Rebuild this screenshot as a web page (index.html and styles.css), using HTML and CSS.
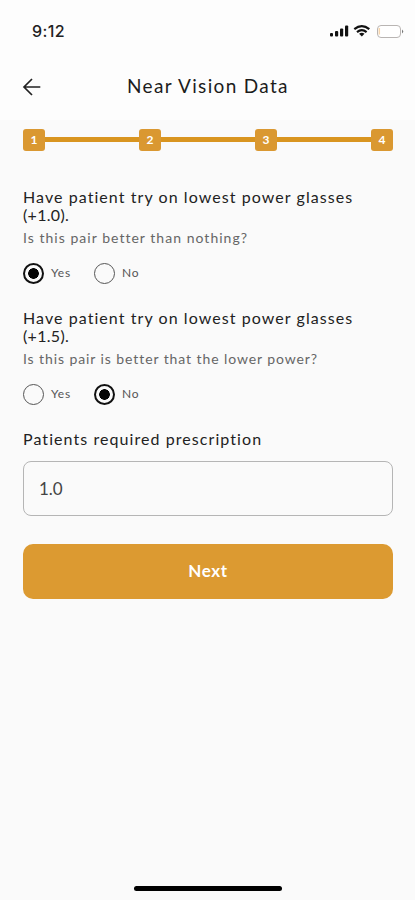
FILE: index.html
```html
<!DOCTYPE html>
<html lang="en">
<head>
<meta charset="utf-8">
<title>Near Vision Data</title>
<link rel="stylesheet" href="styles.css">
</head>
<body>
<header class="top">
  <div class="status">
    <span class="time">9:12</span>
    <svg class="indicators" width="76" height="18" viewBox="0 0 76 18" aria-hidden="true">
      <g fill="#111">
        <rect x="2" y="11" width="3" height="3.5" rx="1"/>
        <rect x="7" y="9" width="3.2" height="5.5" rx="1"/>
        <rect x="12" y="6.5" width="3.2" height="8" rx="1"/>
        <rect x="17" y="3.5" width="3.2" height="11" rx="1"/>
        <path d="M33.8 14.5l-2.7-2.7q2.7-2 5.4 0z"/>
      </g>
      <g fill="none" stroke="#111" stroke-width="2.2">
        <path d="M26.3 7.2q7.5-6.2 15 0"/>
        <path d="M29 10.1q4.8-3.9 9.6 0"/>
      </g>
      <rect x="49.5" y="3.5" width="23" height="12" rx="3.5" fill="#fff" stroke="#b9b5b3"/>
      <path d="M51.3 6v6.5" stroke="#f7d5ac" stroke-width="1.5"/>
      <path d="M74 7.5q2.4 2 0 4z" fill="#777"/>
    </svg>
  </div>
  <div class="bar">
    <svg class="back" width="20" height="20" viewBox="0 0 20 20" fill="none" stroke="#222" stroke-width="1.7" aria-hidden="true"><path d="M18.3 10H2M10 2L2 10l8 8"/></svg>
    <h1>Near Vision Data</h1>
  </div>
</header>
<main>
  <div class="steps">
    <span class="step">1</span><i></i><span class="step">2</span><i></i><span class="step">3</span><i></i><span class="step">4</span>
  </div>
  <section class="question">
    <h2>Have patient try on lowest power glasses <span class="power">(+1.0).</span></h2>
    <p class="q1">Is this pair better than nothing?</p>
    <div class="options">
      <span class="radio on"></span><span class="label yes">Yes</span>
      <span class="radio"></span><span class="label">No</span>
    </div>
  </section>
  <section class="question">
    <h2>Have patient try on lowest power glasses <span class="power">(+1.5).</span></h2>
    <p class="q2">Is this pair is better that the lower power?</p>
    <div class="options">
      <span class="radio"></span><span class="label yes">Yes</span>
      <span class="radio on"></span><span class="label">No</span>
    </div>
  </section>
  <h2 class="field-title">Patients required prescription</h2>
  <div class="field">1.0</div>
  <div class="button"><span>Next</span></div>
</main>
<footer class="home"></footer>
</body>
</html>
```
FILE: styles.css
```css
* { box-sizing: border-box; }
body {
  margin: 0;
  height: 900px;
  display: flex;
  flex-direction: column;
  background: #fafafa;
  color: #222;
  font-family: Lato, sans-serif;
  overflow: hidden;
}
h1, h2, p { margin: 0; font-weight: 400; }
.top { height: 120px; background: #fdfdfd; }
.status {
  height: 60px;
  padding: 2px 11px 0 32px;
  display: flex;
  align-items: center;
  justify-content: space-between;
}
.time { font: 500 16px Inter, sans-serif; letter-spacing: .4px; }
.bar { height: 54px; padding-left: 22px; display: flex; align-items: center; }
.bar h1 { margin: 0 0 3px 85px; font-size: 19px; letter-spacing: 1.33px; color: #1c1c1c; white-space: nowrap; }
main { padding: 8px 22px 0 23px; }
.steps { height: 23px; display: flex; align-items: center; }
.steps i { flex: 1; height: 5px; background: #d99520; }
.step {
  width: 22px;
  height: 22px;
  border-radius: 3px;
  background: #da9831;
  color: #fff;
  font-size: 12px;
  font-weight: 700;
  line-height: 22px;
  text-align: center;
}
.question { height: 121px; }
.steps + .question { margin-top: 37px; }
h2 { font-size: 16px; line-height: 18px; letter-spacing: 1.07px; white-space: nowrap; }
.power { display: block; letter-spacing: .3px; }
p { margin-top: 5px; font-size: 14px; line-height: 18px; color: #666; white-space: nowrap; }
.q1 { letter-spacing: 1.03px; }
.q2 { letter-spacing: .91px; }
.options { display: flex; align-items: center; height: 22px; margin-top: 15px; }
.radio {
  width: 21px;
  height: 21px;
  border: 1.5px solid #555;
  border-radius: 50%;
}
.radio.on {
  border: 2px solid #111;
  background: radial-gradient(circle, #050505 0 5px, transparent 5.6px);
}
.label { margin: 0 0 1px 7px; font-size: 12px; line-height: 18px; letter-spacing: .7px; color: #555; }
.label.yes { width: 43px; }
.field-title { font-size: 16px; }
.field {
  height: 55px;
  margin-top: 13px;
  padding-left: 15px;
  border: 1px solid #b5b5b5;
  border-radius: 8px;
  font-size: 17px;
  line-height: 53px;
  color: #444;
}
.button {
  height: 55px;
  margin-top: 28px;
  border-radius: 10px;
  background: #dc9a31;
  color: #fff;
  font-size: 17px;
  font-weight: 700;
  line-height: 53px;
  letter-spacing: .6px;
  text-align: center;
}
.home { width: 148px; height: 5px; margin: auto 0 9px 134px; border-radius: 3px; background: #000; }
```
